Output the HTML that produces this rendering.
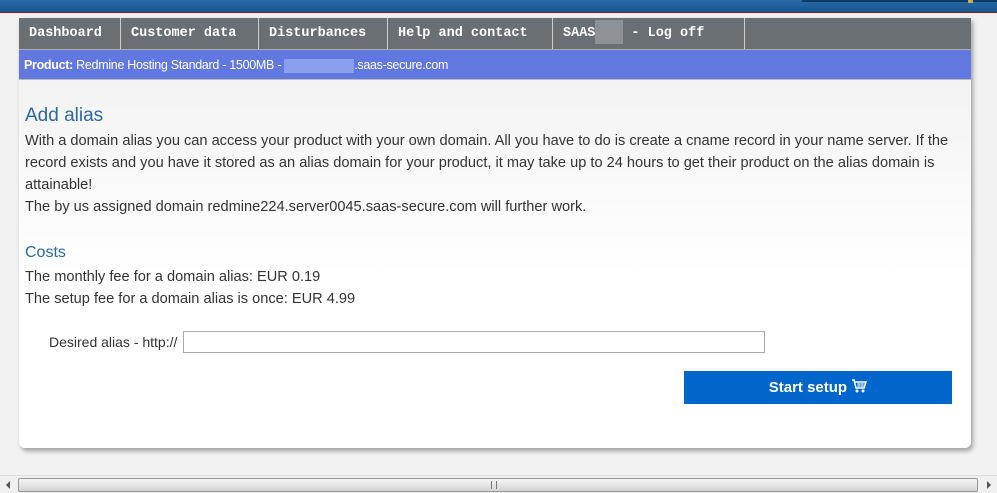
<!DOCTYPE html>
<html><head><meta charset="utf-8"><style>
*{margin:0;padding:0;box-sizing:border-box}
body{width:997px;height:493px;overflow:hidden;background:#f2f2f2;font-family:"Liberation Sans",sans-serif;position:relative}
.top{position:absolute;left:0;top:0;width:997px;height:13px;background:linear-gradient(#2a6aa8,#16568f);border-bottom:1px solid #8b1a1a}
.top .b{position:absolute;left:802px;top:0;width:200px;height:2px;background:#0b3a66}
.card{position:absolute;left:19px;top:18px;width:952px;height:430px;background:linear-gradient(#efefef,#fff 60%);border-radius:0 0 6px 6px;box-shadow:2px 3px 5px rgba(0,0,0,.35)}
.nav{height:32px;background:#6a6f74;display:flex;border-bottom:1px solid #aaa}
.nav div{color:#fff;font-family:"Liberation Mono",monospace;font-weight:bold;font-size:13.5px;line-height:31px;padding-left:10px;border-right:1px solid #ccc;white-space:nowrap;overflow:hidden}
.prod{height:30px;background:#6078e0;color:#fff;font-size:12.5px;line-height:30px;padding-left:5px;letter-spacing:-.3px;border-bottom:1px solid #bbb}
.blur{display:inline-block;vertical-align:middle;background:#8aa0ee;width:70px;height:14px}
.content{padding:0 6px;color:#333;font-size:14.6px;line-height:22px}
h1{font-weight:normal;color:#2b6aa0;font-size:19px;margin-top:24px;margin-bottom:2px;line-height:24px}
h2{font-weight:normal;color:#2b6aa0;font-size:16px;margin-top:24px;margin-bottom:2px;line-height:22px}
.form{position:absolute;left:30px;top:313px;font-size:14px;color:#333}
.form input{position:absolute;left:134px;top:0;width:582px;height:22px;border:1px solid #aaa;background:#fff}
.btn{position:absolute;left:665px;top:353px;width:268px;height:33px;background:#0066cc;color:#fff;font-weight:bold;font-size:15px;text-align:center;line-height:33px}
.sb{position:absolute;left:0;top:475px;width:997px;height:18px;background:#f0f0f0;border-top:1px solid #ddd}
.thumb{position:absolute;left:18px;top:2px;width:960px;height:14px;border:1px solid #999;border-radius:2px;background:linear-gradient(#f4f4f4,#d4d4d4)}
</style></head><body>
<div class="top"><div class="b"></div></div>
<div style="position:absolute;left:968px;top:0;width:5px;height:3px;background:#c8b050"></div>
<div class="card">
<div class="nav"><div style="width:102px">Dashboard</div><div style="width:138px">Customer data</div><div style="width:129px">Disturbances</div><div style="width:165px">Help and contact</div><div style="width:192px">SAAS<span style="display:inline-block;width:28px;height:24px;background:#8e9297;vertical-align:middle;margin:0 8px 0 0"></span>- Log off</div></div>
<div class="prod"><b>Product:</b> Redmine Hosting Standard - 1500MB - <span class="blur"></span>.saas-secure.com</div>
<div class="content">
<h1>Add alias</h1>
<p>With a domain alias you can access your product with your own domain. All you have to do is create a cname record in your name server. If the record exists and you have it stored as an alias domain for your product, it may take up to 24 hours to get their product on the alias domain is attainable!<br>The by us assigned domain redmine224.server0045.saas-secure.com will further work.</p>
<h2>Costs</h2>
<p>The monthly fee for a domain alias: EUR 0.19<br>The setup fee for a domain alias is once: EUR 4.99</p>
</div>
<div class="form"><span style="line-height:22px">Desired alias - http://</span><input></div>
<div class="btn">Start setup <svg width="16" height="15" viewBox="0 0 16 15" style="vertical-align:-2px"><path d="M1 1h2l2 8h8l2-6H4" fill="none" stroke="#fff" stroke-width="1.5"/><path d="M6 5h8M6 7h7M8 3v6M11 3v6" stroke="#cde" stroke-width="1"/><circle cx="6" cy="12" r="1.5" fill="#fff"/><circle cx="12" cy="12" r="1.5" fill="#fff"/></svg></div>
</div>
<div class="sb"><div class="thumb"><div style="position:absolute;left:472px;top:2px;width:6px;height:8px;border-left:1px solid #777;border-right:1px solid #777"></div></div>
<svg style="position:absolute;left:5px;top:5px" width="6" height="8"><path d="M5 0L1 4l4 4z" fill="#555"/></svg>
<svg style="position:absolute;left:986px;top:5px" width="6" height="8"><path d="M1 0l4 4-4 4z" fill="#555"/></svg></div>
</body></html>
